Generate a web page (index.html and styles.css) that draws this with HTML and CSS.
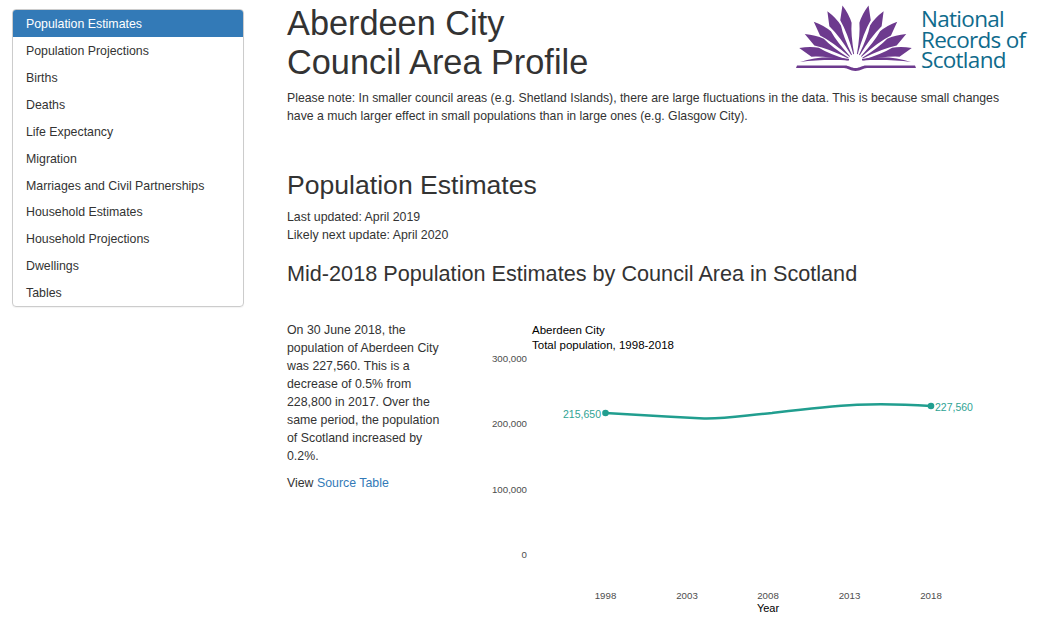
FILE: index.html
```html
<!DOCTYPE html>
<html lang="en">
<head>
    <meta charset="UTF-8">
    <title>Aberdeen City Council Area Profile</title>
    <link rel="stylesheet" href="styles.css">
</head>
<body>
    <div class="page">
        <div class="sidebar">
            <a class="active" href="#">Population Estimates</a>
            <a href="#">Population Projections</a>
            <a href="#">Births</a>
            <a href="#">Deaths</a>
            <a href="#">Life Expectancy</a>
            <a href="#">Migration</a>
            <a href="#">Marriages and Civil Partnerships</a>
            <a href="#">Household Estimates</a>
            <a href="#">Household Projections</a>
            <a href="#">Dwellings</a>
            <a href="#">Tables</a>
        </div>
        <div class="main">
            <div class="header">
                <h1>Aberdeen City<br>Council Area Profile</h1>
                <div class="logo">
                    <svg width="122" height="72" viewBox="0 0 122 72">
                        <defs>
                            <path id="feather" d="M-0.400 -8 Q-1.200 -30 -5.500 -44 L0 -58 Q4.500 -48 5 -39 Q1.500 -28 0.400 -8 Z"/>
                        </defs>
                        <g fill="#6d3a8e">
                            <g transform="translate(60.500 62)">
                                <use href="#feather" transform="rotate(-13)"/>
                                <use href="#feather" transform="rotate(13) scale(-1 1)"/>
                                <use href="#feather" transform="rotate(-29)"/>
                                <use href="#feather" transform="rotate(29) scale(-1 1)"/>
                                <use href="#feather" transform="rotate(-46)"/>
                                <use href="#feather" transform="rotate(46) scale(-1 1)"/>
                                <use href="#feather" transform="rotate(-61)"/>
                                <use href="#feather" transform="rotate(61) scale(-1 1)"/>
                                <use href="#feather" transform="rotate(-76)"/>
                                <use href="#feather" transform="rotate(76) scale(-1 1)"/>
                            </g>
                            <path d="M5 62 C20 57 36 56 54 59 L54 60.500 C38 59.500 20 60 5 62 Z"/>
                            <path d="M116 62 C101 57 85 56 67 59 L67 60.500 C83 59.500 101 60 116 62 Z"/>
                            <path d="M1 68 L2 65.500 L50 65.500 C54 65.500 56 68 60.500 68 C65 68 67 65.500 71 65.500 L120 65.500 L121 68 L72 68 C68 68 66 71 60.500 71 C55 71 53 68 49 68 Z"/>
                        </g>
                    </svg>
                    <div class="logo-text">National<br>Records of<br>Scotland</div>
                </div>
            </div>
            <p class="note">Please note: In smaller council areas (e.g. Shetland Islands), there are large fluctuations in the data. This is because small changes have a much larger effect in small populations than in large ones (e.g. Glasgow City).</p>
            <h2>Population Estimates</h2>
            <p class="updated">Last updated: April 2019<br>Likely next update: April 2020</p>
            <h3>Mid-2018 Population Estimates by Council Area in Scotland</h3>
            <div class="content">
                <div class="summary">
                    <p>On 30 June 2018, the population of Aberdeen City was 227,560. This is a decrease of 0.5% from 228,800 in 2017. Over the same period, the population of Scotland increased by 0.2%.</p>
                    <p>View <a href="#">Source Table</a></p>
                </div>
                <svg class="chart" width="510" height="296" viewBox="0 0 510 296">
                    <text class="title" x="50" y="13">Aberdeen City</text>
                    <text class="title" x="50" y="28">Total population, 1998-2018</text>
                    <text class="tick" x="45" y="40.500" text-anchor="end">300,000</text>
                    <text class="tick" x="45" y="106" text-anchor="end">200,000</text>
                    <text class="tick" x="45" y="171.500" text-anchor="end">100,000</text>
                    <text class="tick" x="45" y="237" text-anchor="end">0</text>
                    <text class="tick" x="123.500" y="278" text-anchor="middle">1998</text>
                    <text class="tick" x="205" y="278" text-anchor="middle">2003</text>
                    <text class="tick" x="286" y="278" text-anchor="middle">2008</text>
                    <text class="tick" x="367.500" y="278" text-anchor="middle">2013</text>
                    <text class="tick" x="449" y="278" text-anchor="middle">2018</text>
                    <text class="axis" x="286" y="291" text-anchor="middle">Year</text>
                    <path class="line" d="M123.500 92 C150 93.500 190 96 222 97.500 C245 98 265 94 290 92 C320 88.500 345 85.500 375 83.800 C400 82.800 425 83.500 449 85"/>
                    <circle class="dot" cx="123.500" cy="92" r="3.300"/>
                    <circle class="dot" cx="449" cy="85" r="3.300"/>
                    <text class="value" x="119" y="97" text-anchor="end">215,650</text>
                    <text class="value" x="453" y="90">227,560</text>
                </svg>
            </div>
        </div>
    </div>
</body>
</html>
```

FILE: styles.css
```css
body {
    font-family: "Liberation Sans", Arial, sans-serif;
    font-size: 12.350px;
    line-height: 18px;
    color: #333;
    margin: 0;
}
.page {
    display: flex;
    align-items: flex-start;
}
.sidebar {
    width: 230px;
    margin: 9.200px 0 0 12px;
    border: 1px solid #ccc;
    border-radius: 4px;
    box-shadow: 0 1px 1px rgba(0, 0, 0, 0.05);
    overflow: hidden;
    flex-shrink: 0;
}
.sidebar a {
    display: block;
    height: 26.900px;
    line-height: 29.900px;
    padding-left: 13px;
    color: #333;
    text-decoration: none;
}
.sidebar a.active {
    background-color: #337ab7;
    color: #fff;
}
.main {
    width: 722px;
    margin-left: 43px;
}
.header {
    display: flex;
    justify-content: space-between;
    align-items: flex-start;
}
h1 {
    font-size: 34.300px;
    font-weight: 400;
    line-height: 39px;
    margin: 4px 0 0;
}
.logo {
    display: flex;
    margin: 0 -21px 0 0;
}
.logo-text {
    font-family: "Open Sans", Lato, sans-serif;
    font-size: 22.500px;
    font-weight: 500;
    line-height: 20.500px;
    color: #0f6b8c;
    width: 109px;
    white-space: nowrap;
    margin: 9px 0 0 4px;
    letter-spacing: -0.700px;
}
.note {
    font-size: 12.250px;
    margin: 7px 0 0;
}
h2 {
    font-size: 26.600px;
    font-weight: 400;
    line-height: 30px;
    margin: 45px 0 0;
}
.updated {
    margin: 8px 0 0;
}
h3 {
    font-size: 21.650px;
    font-weight: 400;
    line-height: 24px;
    margin: 18px 0 0;
}
.content {
    display: flex;
    margin-top: 35px;
}
.summary {
    width: 155px;
}
.summary p {
    margin: 0 0 9px;
}
.summary a {
    color: #337ab7;
    text-decoration: none;
}
.chart {
    margin: 0 0 0 40px;
    flex-shrink: 0;
}
.chart text {
    font-family: "Liberation Sans", Arial, sans-serif;
}
.title {
    font-size: 11.500px;
    fill: #000;
}
.tick {
    font-size: 9.700px;
    fill: #4d4d4d;
}
.axis {
    font-size: 11px;
    fill: #000;
}
.value {
    font-size: 10.500px;
    fill: #2fa394;
}
.line {
    fill: none;
    stroke: #219e8f;
    stroke-width: 2.500;
    stroke-linecap: round;
}
.dot {
    fill: #219e8f;
}
```
